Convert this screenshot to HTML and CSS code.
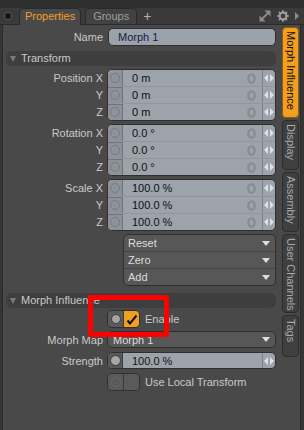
FILE: index.html
```html
<!DOCTYPE html>
<html>
<head>
<meta charset="utf-8">
<link rel="stylesheet" href="styles.css">
</head>
<body>
<div class="topstrip"></div>
<div class="tabbar">
  <span class="pin"></span>
  <div class="tab active">Properties</div>
  <div class="tab">Groups</div>
  <span class="plus">+</span>
  <div class="tools">
    <svg class="ic-expand" width="12" height="12" viewBox="0 0 12 12"><line x1="2.5" y1="9.5" x2="9.5" y2="2.5" stroke="#8c8c8c" stroke-width="1.8"/><polygon points="5.5,0.5 11.5,0.5 11.5,6.5" fill="#8c8c8c"/><polygon points="0.5,5.5 0.5,11.5 6.5,11.5" fill="#8c8c8c"/></svg>
    <svg class="ic-gear" width="12" height="12" viewBox="0 0 12 12"><circle cx="6" cy="6" r="3.4" fill="none" stroke="#9a9a9a" stroke-width="2.2"/><g stroke="#9a9a9a" stroke-width="2"><line x1="6" y1="0.3" x2="6" y2="2.6"/><line x1="6" y1="9.4" x2="6" y2="11.7"/><line x1="0.3" y1="6" x2="2.6" y2="6"/><line x1="9.4" y1="6" x2="11.7" y2="6"/><line x1="2" y1="2" x2="3.6" y2="3.6"/><line x1="8.4" y1="8.4" x2="10" y2="10"/><line x1="10" y1="2" x2="8.4" y2="3.6"/><line x1="2" y1="10" x2="3.6" y2="8.4"/></g></svg>
    <svg class="ic-tri" width="4" height="8" viewBox="0 0 4 8"><polygon points="0,0 4,4 0,8" fill="#8a8a8a"/></svg>
  </div>
</div>
<div class="panel">
  <div class="content">
    <div class="row name-row">
      <span class="lbl">Name</span>
      <div class="textfield">Morph 1</div>
    </div>

    <div class="section s-transform"><span class="caret"></span>Transform</div>

    <div class="grp g-first">
      <div class="labels"><span>Position X</span><span>Y</span><span>Z</span></div>
      <div class="fbox">
        <div class="frow"><span class="dot"><i></i></span><span class="val">0 m<svg class="ring" width="9" height="11" viewBox="0 0 9 11"><ellipse cx="4.5" cy="5.5" rx="3.2" ry="4.2" fill="none" stroke="#878c91" stroke-width="2.2"/></svg></span><span class="arr"><svg width="10" height="8" viewBox="0 0 10 8"><polygon points="0,4 4,0 4,8" fill="#dde1e5"/><polygon points="6,0 10,4 6,8" fill="#dde1e5"/></svg></span></div>
        <div class="frow"><span class="dot"><i></i></span><span class="val">0 m<svg class="ring" width="9" height="11" viewBox="0 0 9 11"><ellipse cx="4.5" cy="5.5" rx="3.2" ry="4.2" fill="none" stroke="#878c91" stroke-width="2.2"/></svg></span><span class="arr"><svg width="10" height="8" viewBox="0 0 10 8"><polygon points="0,4 4,0 4,8" fill="#dde1e5"/><polygon points="6,0 10,4 6,8" fill="#dde1e5"/></svg></span></div>
        <div class="frow"><span class="dot"><i></i></span><span class="val">0 m<svg class="ring" width="9" height="11" viewBox="0 0 9 11"><ellipse cx="4.5" cy="5.5" rx="3.2" ry="4.2" fill="none" stroke="#878c91" stroke-width="2.2"/></svg></span><span class="arr"><svg width="10" height="8" viewBox="0 0 10 8"><polygon points="0,4 4,0 4,8" fill="#dde1e5"/><polygon points="6,0 10,4 6,8" fill="#dde1e5"/></svg></span></div>
      </div>
    </div>

    <div class="grp">
      <div class="labels"><span>Rotation X</span><span>Y</span><span>Z</span></div>
      <div class="fbox">
        <div class="frow"><span class="dot"><i></i></span><span class="val">0.0 °<svg class="ring" width="9" height="11" viewBox="0 0 9 11"><ellipse cx="4.5" cy="5.5" rx="3.2" ry="4.2" fill="none" stroke="#878c91" stroke-width="2.2"/></svg></span><span class="arr"><svg width="10" height="8" viewBox="0 0 10 8"><polygon points="0,4 4,0 4,8" fill="#dde1e5"/><polygon points="6,0 10,4 6,8" fill="#dde1e5"/></svg></span></div>
        <div class="frow"><span class="dot"><i></i></span><span class="val">0.0 °<svg class="ring" width="9" height="11" viewBox="0 0 9 11"><ellipse cx="4.5" cy="5.5" rx="3.2" ry="4.2" fill="none" stroke="#878c91" stroke-width="2.2"/></svg></span><span class="arr"><svg width="10" height="8" viewBox="0 0 10 8"><polygon points="0,4 4,0 4,8" fill="#dde1e5"/><polygon points="6,0 10,4 6,8" fill="#dde1e5"/></svg></span></div>
        <div class="frow"><span class="dot"><i></i></span><span class="val">0.0 °<svg class="ring" width="9" height="11" viewBox="0 0 9 11"><ellipse cx="4.5" cy="5.5" rx="3.2" ry="4.2" fill="none" stroke="#878c91" stroke-width="2.2"/></svg></span><span class="arr"><svg width="10" height="8" viewBox="0 0 10 8"><polygon points="0,4 4,0 4,8" fill="#dde1e5"/><polygon points="6,0 10,4 6,8" fill="#dde1e5"/></svg></span></div>
      </div>
    </div>

    <div class="grp">
      <div class="labels"><span>Scale X</span><span>Y</span><span>Z</span></div>
      <div class="fbox">
        <div class="frow"><span class="dot"><i></i></span><span class="val">100.0 %<svg class="ring" width="9" height="11" viewBox="0 0 9 11"><ellipse cx="4.5" cy="5.5" rx="3.2" ry="4.2" fill="none" stroke="#878c91" stroke-width="2.2"/></svg></span><span class="arr"><svg width="10" height="8" viewBox="0 0 10 8"><polygon points="0,4 4,0 4,8" fill="#dde1e5"/><polygon points="6,0 10,4 6,8" fill="#dde1e5"/></svg></span></div>
        <div class="frow"><span class="dot"><i></i></span><span class="val">100.0 %<svg class="ring" width="9" height="11" viewBox="0 0 9 11"><ellipse cx="4.5" cy="5.5" rx="3.2" ry="4.2" fill="none" stroke="#878c91" stroke-width="2.2"/></svg></span><span class="arr"><svg width="10" height="8" viewBox="0 0 10 8"><polygon points="0,4 4,0 4,8" fill="#dde1e5"/><polygon points="6,0 10,4 6,8" fill="#dde1e5"/></svg></span></div>
        <div class="frow"><span class="dot"><i></i></span><span class="val">100.0 %<svg class="ring" width="9" height="11" viewBox="0 0 9 11"><ellipse cx="4.5" cy="5.5" rx="3.2" ry="4.2" fill="none" stroke="#878c91" stroke-width="2.2"/></svg></span><span class="arr"><svg width="10" height="8" viewBox="0 0 10 8"><polygon points="0,4 4,0 4,8" fill="#dde1e5"/><polygon points="6,0 10,4 6,8" fill="#dde1e5"/></svg></span></div>
      </div>
    </div>

    <div class="btngrp">
      <div class="ddrow">Reset<svg width="8" height="5" viewBox="0 0 8 5"><polygon points="0,0 8,0 4,5" fill="#dedede"/></svg></div>
      <div class="ddrow">Zero<svg width="8" height="5" viewBox="0 0 8 5"><polygon points="0,0 8,0 4,5" fill="#dedede"/></svg></div>
      <div class="ddrow">Add<svg width="8" height="5" viewBox="0 0 8 5"><polygon points="0,0 8,0 4,5" fill="#dedede"/></svg></div>
    </div>

    <div class="section s-morph"><span class="caret"></span>Morph Influence</div>

    <div class="row toggle-row r-enable">
      <span class="lbl"></span>
      <div class="checkline">
        <div class="toggle on"><span class="tdot"><i></i></span><span class="tbox"><svg width="12" height="11" viewBox="0 0 12 11"><path d="M1.5 6.5 L4 9.5 L10.5 1.5" fill="none" stroke="#111" stroke-width="2"/></svg></span></div>
        <span class="ctext">Enable</span>
      </div>
    </div>

    <div class="row r-map">
      <span class="lbl">Morph Map</span>
      <div class="dropdown">Morph 1<svg width="8" height="5" viewBox="0 0 8 5"><polygon points="0,0 8,0 4,5" fill="#dedede"/></svg></div>
    </div>

    <div class="row r-strength">
      <span class="lbl">Strength</span>
      <div class="fbox">
        <div class="frow"><span class="dot dark"><i></i></span><span class="val">100.0 %</span><span class="arr"><svg width="10" height="8" viewBox="0 0 10 8"><polygon points="0,4 4,0 4,8" fill="#dde1e5"/><polygon points="6,0 10,4 6,8" fill="#dde1e5"/></svg></span></div>
      </div>
    </div>

    <div class="row toggle-row r-local">
      <span class="lbl"></span>
      <div class="checkline">
        <div class="toggle off"><span class="tdot"><i></i></span><span class="tbox"></span></div>
        <span class="ctext">Use Local Transform</span>
      </div>
    </div>
  </div>

  <div class="vtabs">
    <div class="vtab active t-morph">Morph Influence</div>
    <div class="vtab t-display">Display</div>
    <div class="vtab t-assembly">Assembly</div>
    <div class="vtab t-user">User Channels</div>
    <div class="vtab t-tags">Tags</div>
  </div>
</div>
<div class="highlight"></div>
</body>
</html>
```
FILE: styles.css
```css
* { box-sizing: border-box; margin: 0; padding: 0; }
html, body { width: 304px; height: 430px; overflow: hidden; }
body {
  background: #353535;
  font-family: "Liberation Sans", Arial, sans-serif;
  font-size: 11px;
  color: #c9c9c9;
  display: flex;
  flex-direction: column;
  position: relative;
}
.topstrip { height: 8px; flex: none; background: #2f2f2f; }
.tabbar {
  width: 304px;
  height: 17px; flex: none;
  display: flex; align-items: flex-end;
  background: #3a3a3a;
  border-bottom: 1px solid #2a2a2a;
  padding-left: 5px;
}
.pin {
  flex: none;
  width: 6px; height: 6px; border-radius: 50%;
  background: #151515; box-shadow: 0 0 0 1px #505050;
  align-self: center; margin-right: 8px;
}
.tab {
  flex: none;
  height: 16px; line-height: 15px;
  padding: 0 7px;
  border: 1px solid #2a2a2a; border-bottom: none;
  border-radius: 5px 5px 0 0;
  background: #424242; color: #9d9d9d;
  margin-right: 4px;
}
.tab.active {
  background: #494949; color: #f2a028;
  height: 17px; margin-bottom: -1px; padding: 0 5px;
}
.plus { flex: none; color: #b0b0b0; font-size: 14px; line-height: 14px; align-self: center; margin-left: 2px; }
.tools {
  flex: none; width: 42px;
  margin-left: auto; display: flex; align-items: center; align-self: center;
  margin-right: 3px;
}
.tools svg { display: block; flex: none; }
.ic-expand { margin-right: 6px; }
.ic-gear { margin-right: 6px; }

.panel {
  flex: 1; display: flex;
  margin: 0 3px 0 2px;
  background: #494949;
  border-left: 1px solid #2b2b2b;
  border-right: 1px solid #2b2b2b;
}
.content {
  width: 273px; flex: none;
  padding: 3px 0 0 3px;
  display: flex; flex-direction: column;
}
.row { display: flex; align-items: center; }
.lbl { width: 97px; flex: none; text-align: right; color: #c9c9c9; margin-right: 4px; }
.textfield {
  flex: 1; height: 18px; line-height: 16px;
  background: #9ba2a9; border: 1px solid #2f2f2f; border-radius: 5px;
  color: #16204a; padding-left: 9px; margin-left: 1px;
}
.section {
  height: 15px; line-height: 15px;
  background: #3e3e3e; border-radius: 6px;
  color: #c9c9c9; display: flex; align-items: center;
  padding-left: 4px;
}
.caret {
  width: 0; height: 0; margin-right: 5px;
  border-left: 3.5px solid transparent; border-right: 3.5px solid transparent;
  border-top: 6px solid #7b7b7b;
}
.s-transform { margin-top: 5px; }
.s-morph { margin-top: 7px; }

.grp { display: flex; margin-top: 3px; }
.labels {
  width: 97px; flex: none; margin-right: 4px;
  display: flex; flex-direction: column; align-items: flex-end;
  padding-top: 1px; gap: 1px;
}
.labels span { height: 16px; line-height: 16px; }
.fbox {
  flex: 1; border: 1px solid #2f2f2f; border-radius: 5px; overflow: hidden;
  background: #9ca3aa;
}
.frow { display: flex; height: 16px; }
.frow + .frow { border-top: 1px solid #8f969c; height: 17px; }
.dot {
  width: 15px; flex: none; background: #8d9399;
  border-right: 1px solid #6f7479;
  display: flex; align-items: center; justify-content: center;
}
.frow + .frow .dot { box-shadow: inset 0 1px 0 #6f7479; }
.dot i {
  width: 10px; height: 10px; border-radius: 50%;
  border: 1px solid #777c81; background: #8d9399;
}
.dot.dark { background: #595959; border-right-color: #3c3c3c; }
.dot.dark i { background: #a6a6a6; border-color: #3a3a3a; width: 11px; height: 11px; }
.val {
  flex: 1; display: flex; align-items: center;
  padding-left: 9px; color: #111;
}
.ring { margin-left: auto; margin-right: 6px; }
.arr {
  width: 13px; flex: none; border-left: 1px solid #7c8288;
  display: flex; align-items: center; justify-content: center;
}

.btngrp {
  margin: 3px 0 0 117px;
  border: 1px solid #2f2f2f; border-radius: 5px; overflow: hidden;
  background: #575757;
}
.ddrow {
  height: 16px; display: flex; align-items: center; justify-content: space-between;
  padding: 0 5px 0 4px; color: #dcdcdc;
}
.ddrow + .ddrow { border-top: 1px solid #444; height: 17px; }

.r-enable { margin-top: 2px; }
.checkline { display: flex; align-items: center; }
.toggle {
  display: flex; width: 33px; height: 18px;
  border: 1px solid #2f2f2f; border-radius: 5px; overflow: hidden;
}
.tdot {
  width: 16px; background: #5a5a5a; border-right: 1px solid #3a3a3a;
  display: flex; align-items: center; justify-content: center;
}
.tdot i { width: 10px; height: 10px; border-radius: 50%; }
.toggle.on .tdot i { background: #a4a4a4; border: 1px solid #3d3d3d; }
.toggle.off .tdot i { border: 1px solid #666; }
.tbox { flex: 1; background: #5a5a5a; display: flex; align-items: center; justify-content: center; }
.toggle.on .tbox { background: #f0a020; }
.ctext { margin-left: 5px; color: #c9c9c9; }

.r-map { margin-top: 3px; }
.dropdown {
  flex: 1; height: 17px; margin-left: 0;
  background: #575757; border: 1px solid #2f2f2f; border-radius: 5px;
  display: flex; align-items: center; justify-content: space-between;
  padding: 0 5px 0 5px; color: #dcdcdc;
}
.r-strength { margin-top: 4px; }
.r-strength .fbox { height: 17px; }
.r-strength .frow { height: 15px; }
.r-local { margin-top: 4px; }

.vtabs {
  width: 17px; flex: none; margin-left: 6px;
  padding-top: 2px;
  display: flex; flex-direction: column; gap: 2px;
}
.vtab {
  writing-mode: vertical-rl;
  white-space: nowrap;
  width: 17px;
  line-height: 15px;
  background: #3f3f3f; color: #a9a9a9;
  border: 1px solid #2c2c2c; border-radius: 4px;
  padding: 3px 0 4px;
  overflow: hidden;
}
.vtab.active { background: #f29e1e; color: #111; border-color: #8d5c12; }
.t-morph { height: 91px; }
.t-display { height: 50px; }
.t-assembly { height: 60px; }
.t-user { height: 79px; }
.t-tags { height: 42px; }

.highlight {
  position: absolute; left: 88px; top: 295px;
  width: 81px; height: 42px;
  border: 5px solid #ff0000;
}
```
